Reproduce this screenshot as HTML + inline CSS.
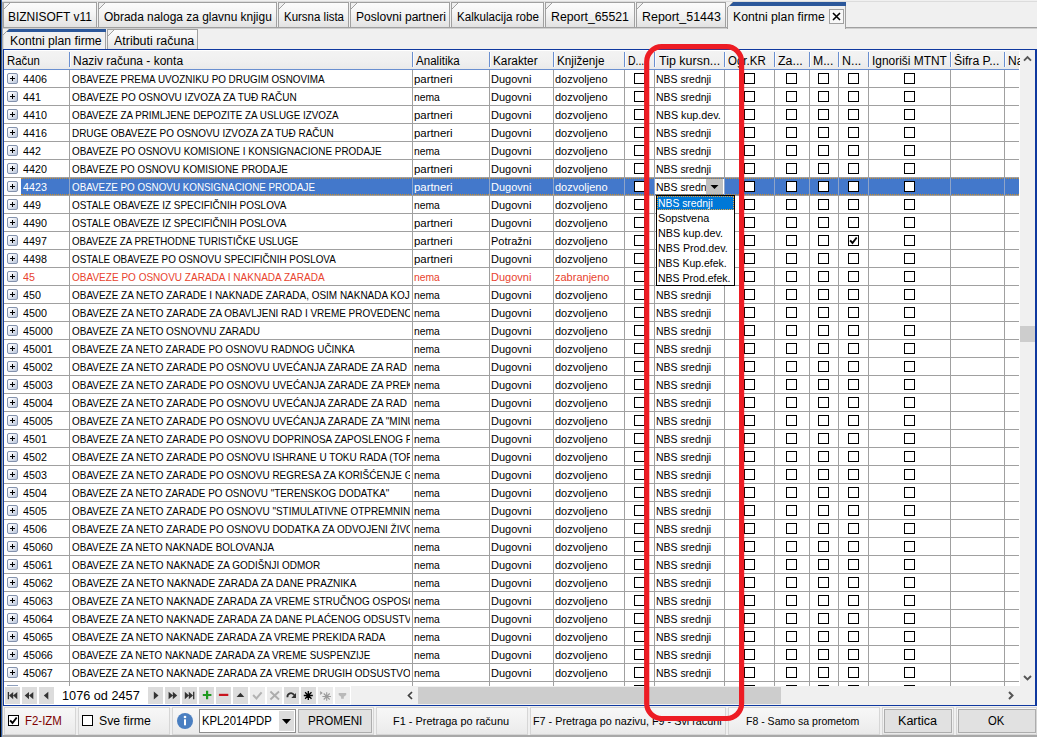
<!DOCTYPE html>
<html lang="sr"><head><meta charset="utf-8"><title>Kontni plan firme</title>
<style>
html,body{margin:0;padding:0}
body{width:1037px;height:737px;overflow:hidden;background:#f0f0f0;position:relative;font-family:"Liberation Sans","DejaVu Sans",sans-serif;font-size:12px;color:#000}
.a{position:absolute}
.t{position:absolute;white-space:nowrap;line-height:14px;height:15px}
.k{overflow:hidden}
.s{display:inline-block;transform-origin:0 50%}
.tab{position:absolute;top:2px;height:24px;border:1px solid #a0a0a0;border-bottom:none;box-sizing:content-box;
 background:linear-gradient(135deg,#f0f0f0 0,#f0f0f0 3.9px,#a0a0a0 3.9px,#a0a0a0 4.8px,rgba(0,0,0,0) 4.8px),linear-gradient(#fcfcfc,#f4f4f4 45%,#e2e2e2)}
.hs{position:absolute;top:52px;height:15px;width:1px;background:#6a8fd0;box-shadow:1px 0 0 #fbfbfb}
.vl{position:absolute;top:70px;height:616px;width:1px;background:#a0a0a0}
.hl{position:absolute;left:4px;width:1015px;height:1px;background:#a0a0a0}
.cb{position:absolute;width:9px;height:9px;border:1px solid #000;background:#fff}
.ex{position:absolute;left:7px;width:9px;height:9px;border:1px solid #8392ad;border-radius:2px;background:linear-gradient(135deg,#fdfdfe 15%,#b9c5da)}
.ex:before{content:"";position:absolute;left:2px;top:4px;width:5px;height:1px;background:#000}
.ex:after{content:"";position:absolute;left:4px;top:2px;width:1px;height:5px;background:#000}
.nb{position:absolute;top:687px;width:15px;height:17px;background:#dcdcdc}
.nb.d{background:#ececec}
.pn{position:absolute;top:707px;height:26px;border:1px solid #d6d6d6;box-sizing:content-box;background:linear-gradient(#f7f7f7,#f1f1f1 55%,#eaeaea)}
.btn{position:absolute;top:709px;height:22px;border:1px solid #adadad;background:#e1e1e1;box-sizing:content-box}
</style></head><body>

<div class="a" style="left:0;top:0;width:1px;height:737px;background:#000"></div>
<div class="a" style="left:1px;top:0;width:1px;height:737px;background:#2b5ca8"></div>
<div class="a" style="left:2px;top:2px;width:1px;height:735px;background:#adadad"></div>
<div class="a" style="left:2px;top:1px;width:1035px;height:1px;background:#dcdcdc"></div>
<div class="a" style="left:3px;top:27px;width:1034px;height:1px;background:#a0a0a0"></div>
<div class="a" style="left:3px;top:28px;width:1034px;height:1px;background:#cfcfcf"></div>
<div class="tab" style="left:3px;width:92px"></div>
<div class="t" style="left:8px;top:10px"><span class="s" style="transform:scaleX(0.995)">BIZNISOFT v11</span></div>
<div class="tab" style="left:98px;width:177px"></div>
<div class="t" style="left:104px;top:10px"><span class="s" style="transform:scaleX(0.994)">Obrada naloga za glavnu knjigu</span></div>
<div class="tab" style="left:278px;width:69px"></div>
<div class="t" style="left:284px;top:10px"><span class="s" style="transform:scaleX(0.957)">Kursna lista</span></div>
<div class="tab" style="left:350px;width:98px"></div>
<div class="t" style="left:356px;top:10px"><span class="s" style="transform:scaleX(1.005)">Poslovni partneri</span></div>
<div class="tab" style="left:451px;width:91px"></div>
<div class="t" style="left:457px;top:10px"><span class="s" style="transform:scaleX(0.966)">Kalkulacija robe</span></div>
<div class="tab" style="left:545px;width:88px"></div>
<div class="t" style="left:551px;top:10px"><span class="s" style="transform:scaleX(1.025)">Report_65521</span></div>
<div class="tab" style="left:636px;width:88px"></div>
<div class="t" style="left:642px;top:10px"><span class="s" style="transform:scaleX(1.036)">Report_51443</span></div>
<div class="a" style="left:727px;top:2px;width:119px;height:27px;background:#f0f0f0;border-left:1px solid #a0a0a0;border-right:1px solid #a0a0a0;box-sizing:border-box"></div>
<div class="a" style="left:727px;top:2px;width:119px;height:4px;background:#2b579a"></div>
<div class="a" style="left:727px;top:2px;width:8px;height:8px;background:linear-gradient(135deg,#f0f0f0 0,#f0f0f0 3.9px,#a0a0a0 3.9px,#a0a0a0 4.8px,rgba(0,0,0,0) 4.8px)"></div>
<div class="t" style="left:733px;top:10px"><span class="s" style="transform:scaleX(1.019)">Kontni plan firme</span></div>
<div class="a" style="left:829px;top:9px;width:13px;height:13px;border:1px solid #a0a0a0;background:#f8f8f8;box-sizing:content-box"><svg width="13" height="13" viewBox="0 0 13 13" style="position:absolute;left:0;top:0"><path d="M3 3L10 10M10 3L3 10" stroke="#000" stroke-width="1.6" fill="none"/></svg></div>
<div class="a" style="left:3px;top:29px;width:103px;height:20px;background:#f0f0f0;border-left:1px solid #d8d8d8;border-right:1px solid #a0a0a0;box-sizing:border-box"></div>
<div class="a" style="left:3px;top:29px;width:103px;height:3px;background:#2b579a"></div>
<div class="a" style="left:3px;top:29px;width:8px;height:8px;background:linear-gradient(135deg,#f0f0f0 0,#f0f0f0 3.9px,#a0a0a0 3.9px,#a0a0a0 4.8px,rgba(0,0,0,0) 4.8px)"></div>
<div class="t" style="left:10px;top:34px"><span class="s" style="transform:scaleX(1.018)">Kontni plan firme</span></div>
<div class="tab" style="left:107px;top:29px;width:89px;height:19px"></div>
<div class="t" style="left:114px;top:34px"><span class="s" style="transform:scaleX(1.037)">Atributi računa</span></div>
<div class="a" style="left:3px;top:49px;width:1034px;height:657px;background:#10399f"></div>
<div class="a" style="left:4px;top:50px;width:1031px;height:655px;background:#fff"></div>
<div class="a" style="left:4px;top:50px;width:1015px;height:19px;background:linear-gradient(#fff 0,#fff 1px,#f3f3f3 1px,#f0f0f0 60%,#eaeaea)"></div>
<div class="a" style="left:4px;top:69px;width:1015px;height:1px;background:#6a8fd0"></div>
<div class="t k" style="left:7px;top:54px;width:62px"><span class="s" style="transform:scaleX(0.946)">Račun</span></div>
<div class="t k" style="left:73px;top:54px;width:339px">Naziv računa - konta</div>
<div class="t k" style="left:416px;top:54px;width:73px"><span class="s" style="transform:scaleX(0.963)">Analitika</span></div>
<div class="t k" style="left:493px;top:54px;width:60px"><span class="s" style="transform:scaleX(0.983)">Karakter</span></div>
<div class="t k" style="left:557px;top:54px;width:67px"><span class="s" style="transform:scaleX(0.973)">Knjiženje</span></div>
<div class="t k" style="left:628px;top:54px;width:26px"><span class="s" style="transform:scaleX(0.868)">D...</span></div>
<div class="t k" style="left:659px;top:54px;width:65px"><span class="s" style="transform:scaleX(1.039)">Tip kursn...</span></div>
<div class="t k" style="left:728px;top:54px;width:46px"><span class="s" style="transform:scaleX(0.960)">Ogr.KR</span></div>
<div class="t k" style="left:778px;top:54px;width:31px"><span class="s" style="transform:scaleX(1.033)">Za...</span></div>
<div class="t k" style="left:813px;top:54px;width:25px"><span class="s" style="transform:scaleX(1.015)">M...</span></div>
<div class="t k" style="left:842px;top:54px;width:26px"><span class="s" style="transform:scaleX(1.034)">N...</span></div>
<div class="t k" style="left:872px;top:54px;width:78px"><span class="s" style="transform:scaleX(0.993)">Ignoriši MTNT</span></div>
<div class="t k" style="left:954px;top:54px;width:50px"><span class="s" style="transform:scaleX(1.021)">Šifra P...</span></div>
<div class="t k" style="left:1008px;top:54px;width:12px">Naziv</div>
<div class="hs" style="left:69px"></div>
<div class="vl" style="left:69px"></div>
<div class="hs" style="left:412px"></div>
<div class="vl" style="left:412px"></div>
<div class="hs" style="left:489px"></div>
<div class="vl" style="left:489px"></div>
<div class="hs" style="left:553px"></div>
<div class="vl" style="left:553px"></div>
<div class="hs" style="left:624px"></div>
<div class="vl" style="left:624px"></div>
<div class="hs" style="left:654px"></div>
<div class="vl" style="left:654px"></div>
<div class="hs" style="left:724px"></div>
<div class="vl" style="left:724px"></div>
<div class="hs" style="left:774px"></div>
<div class="vl" style="left:774px"></div>
<div class="hs" style="left:809px"></div>
<div class="vl" style="left:809px"></div>
<div class="hs" style="left:838px"></div>
<div class="vl" style="left:838px"></div>
<div class="hs" style="left:868px"></div>
<div class="vl" style="left:868px"></div>
<div class="hs" style="left:950px"></div>
<div class="vl" style="left:950px"></div>
<div class="hs" style="left:1004px"></div>
<div class="vl" style="left:1004px"></div>
<div class="hl" style="top:87px"></div>
<div class="ex" style="top:73px"></div>
<div class="t k" style="left:23px;top:72px;font-size:11px;width:46px"><span class="s" style="transform:scaleX(0.975)">4406</span></div>
<div class="t k" style="left:72px;top:72px;font-size:11px;width:338px"><span class="s" style="transform:scaleX(0.897)">OBAVEZE PREMA UVOZNIKU PO DRUGIM OSNOVIMA</span></div>
<div class="t k" style="left:414px;top:72px;font-size:11px;width:75px"><span class="s" style="transform:scaleX(1.035)">partneri</span></div>
<div class="t k" style="left:491px;top:72px;font-size:11px;width:62px">Dugovni</div>
<div class="t k" style="left:555px;top:72px;font-size:11px;width:69px">dozvoljeno</div>
<div class="t k" style="left:656px;top:72px;font-size:11px;width:68px"><span class="s" style="transform:scaleX(0.950)">NBS srednji</span></div>
<div class="cb" style="left:634px;top:73px"></div>
<div class="cb" style="left:744px;top:73px"></div>
<div class="cb" style="left:786px;top:73px"></div>
<div class="cb" style="left:818px;top:73px"></div>
<div class="cb" style="left:848px;top:73px"></div>
<div class="cb" style="left:904px;top:73px"></div>
<div class="hl" style="top:105px"></div>
<div class="ex" style="top:91px"></div>
<div class="t k" style="left:23px;top:90px;font-size:11px;width:46px"><span class="s" style="transform:scaleX(0.975)">441</span></div>
<div class="t k" style="left:72px;top:90px;font-size:11px;width:338px"><span class="s" style="transform:scaleX(0.909)">OBAVEZE PO OSNOVU IZVOZA ZA TUĐ RAČUN</span></div>
<div class="t k" style="left:414px;top:90px;font-size:11px;width:75px"><span class="s" style="transform:scaleX(0.940)">nema</span></div>
<div class="t k" style="left:491px;top:90px;font-size:11px;width:62px">Dugovni</div>
<div class="t k" style="left:555px;top:90px;font-size:11px;width:69px">dozvoljeno</div>
<div class="t k" style="left:656px;top:90px;font-size:11px;width:68px"><span class="s" style="transform:scaleX(0.950)">NBS srednji</span></div>
<div class="cb" style="left:634px;top:91px"></div>
<div class="cb" style="left:744px;top:91px"></div>
<div class="cb" style="left:786px;top:91px"></div>
<div class="cb" style="left:818px;top:91px"></div>
<div class="cb" style="left:848px;top:91px"></div>
<div class="cb" style="left:904px;top:91px"></div>
<div class="hl" style="top:123px"></div>
<div class="ex" style="top:109px"></div>
<div class="t k" style="left:23px;top:108px;font-size:11px;width:46px"><span class="s" style="transform:scaleX(0.975)">4410</span></div>
<div class="t k" style="left:72px;top:108px;font-size:11px;width:338px"><span class="s" style="transform:scaleX(0.894)">OBAVEZE ZA PRIMLJENE DEPOZITE ZA USLUGE IZVOZA</span></div>
<div class="t k" style="left:414px;top:108px;font-size:11px;width:75px"><span class="s" style="transform:scaleX(1.035)">partneri</span></div>
<div class="t k" style="left:491px;top:108px;font-size:11px;width:62px">Dugovni</div>
<div class="t k" style="left:555px;top:108px;font-size:11px;width:69px">dozvoljeno</div>
<div class="t k" style="left:656px;top:108px;font-size:11px;width:68px"><span class="s" style="transform:scaleX(0.975)">NBS kup.dev.</span></div>
<div class="cb" style="left:634px;top:109px"></div>
<div class="cb" style="left:744px;top:109px"></div>
<div class="cb" style="left:786px;top:109px"></div>
<div class="cb" style="left:818px;top:109px"></div>
<div class="cb" style="left:848px;top:109px"></div>
<div class="cb" style="left:904px;top:109px"></div>
<div class="hl" style="top:141px"></div>
<div class="ex" style="top:127px"></div>
<div class="t k" style="left:23px;top:126px;font-size:11px;width:46px"><span class="s" style="transform:scaleX(0.975)">4416</span></div>
<div class="t k" style="left:72px;top:126px;font-size:11px;width:338px"><span class="s" style="transform:scaleX(0.903)">DRUGE OBAVEZE PO OSNOVU IZVOZA ZA TUĐ RAČUN</span></div>
<div class="t k" style="left:414px;top:126px;font-size:11px;width:75px"><span class="s" style="transform:scaleX(1.035)">partneri</span></div>
<div class="t k" style="left:491px;top:126px;font-size:11px;width:62px">Dugovni</div>
<div class="t k" style="left:555px;top:126px;font-size:11px;width:69px">dozvoljeno</div>
<div class="t k" style="left:656px;top:126px;font-size:11px;width:68px"><span class="s" style="transform:scaleX(0.950)">NBS srednji</span></div>
<div class="cb" style="left:634px;top:127px"></div>
<div class="cb" style="left:744px;top:127px"></div>
<div class="cb" style="left:786px;top:127px"></div>
<div class="cb" style="left:818px;top:127px"></div>
<div class="cb" style="left:848px;top:127px"></div>
<div class="cb" style="left:904px;top:127px"></div>
<div class="hl" style="top:159px"></div>
<div class="ex" style="top:145px"></div>
<div class="t k" style="left:23px;top:144px;font-size:11px;width:46px"><span class="s" style="transform:scaleX(0.975)">442</span></div>
<div class="t k" style="left:72px;top:144px;font-size:11px;width:338px"><span class="s" style="transform:scaleX(0.902)">OBAVEZE PO OSNOVU KOMISIONE I KONSIGNACIONE PRODAJE</span></div>
<div class="t k" style="left:414px;top:144px;font-size:11px;width:75px"><span class="s" style="transform:scaleX(0.940)">nema</span></div>
<div class="t k" style="left:491px;top:144px;font-size:11px;width:62px">Dugovni</div>
<div class="t k" style="left:555px;top:144px;font-size:11px;width:69px">dozvoljeno</div>
<div class="t k" style="left:656px;top:144px;font-size:11px;width:68px"><span class="s" style="transform:scaleX(0.950)">NBS srednji</span></div>
<div class="cb" style="left:634px;top:145px"></div>
<div class="cb" style="left:744px;top:145px"></div>
<div class="cb" style="left:786px;top:145px"></div>
<div class="cb" style="left:818px;top:145px"></div>
<div class="cb" style="left:848px;top:145px"></div>
<div class="cb" style="left:904px;top:145px"></div>
<div class="hl" style="top:177px"></div>
<div class="ex" style="top:163px"></div>
<div class="t k" style="left:23px;top:162px;font-size:11px;width:46px"><span class="s" style="transform:scaleX(0.975)">4420</span></div>
<div class="t k" style="left:72px;top:162px;font-size:11px;width:338px"><span class="s" style="transform:scaleX(0.895)">OBAVEZE PO OSNOVU KOMISIONE PRODAJE</span></div>
<div class="t k" style="left:414px;top:162px;font-size:11px;width:75px"><span class="s" style="transform:scaleX(1.035)">partneri</span></div>
<div class="t k" style="left:491px;top:162px;font-size:11px;width:62px">Dugovni</div>
<div class="t k" style="left:555px;top:162px;font-size:11px;width:69px">dozvoljeno</div>
<div class="t k" style="left:656px;top:162px;font-size:11px;width:68px"><span class="s" style="transform:scaleX(0.950)">NBS srednji</span></div>
<div class="cb" style="left:634px;top:163px"></div>
<div class="cb" style="left:744px;top:163px"></div>
<div class="cb" style="left:786px;top:163px"></div>
<div class="cb" style="left:818px;top:163px"></div>
<div class="cb" style="left:848px;top:163px"></div>
<div class="cb" style="left:904px;top:163px"></div>
<div class="hl" style="top:195px"></div>
<div class="a" style="left:21px;top:178px;width:998px;height:17px;background:#4378cb"></div>
<div class="a" style="left:21px;top:178px;width:998px;height:17px;box-sizing:border-box;border-top:1px dotted #c78d2e;border-bottom:1px dotted #c78d2e"></div>
<div class="a" style="left:69px;top:178px;width:1px;height:17px;background:#8fa4c8"></div>
<div class="a" style="left:412px;top:178px;width:1px;height:17px;background:#8fa4c8"></div>
<div class="a" style="left:489px;top:178px;width:1px;height:17px;background:#8fa4c8"></div>
<div class="a" style="left:553px;top:178px;width:1px;height:17px;background:#8fa4c8"></div>
<div class="a" style="left:624px;top:178px;width:1px;height:17px;background:#8fa4c8"></div>
<div class="a" style="left:654px;top:178px;width:1px;height:17px;background:#8fa4c8"></div>
<div class="a" style="left:724px;top:178px;width:1px;height:17px;background:#8fa4c8"></div>
<div class="a" style="left:774px;top:178px;width:1px;height:17px;background:#8fa4c8"></div>
<div class="a" style="left:809px;top:178px;width:1px;height:17px;background:#8fa4c8"></div>
<div class="a" style="left:838px;top:178px;width:1px;height:17px;background:#8fa4c8"></div>
<div class="a" style="left:868px;top:178px;width:1px;height:17px;background:#8fa4c8"></div>
<div class="a" style="left:950px;top:178px;width:1px;height:17px;background:#8fa4c8"></div>
<div class="a" style="left:1004px;top:178px;width:1px;height:17px;background:#8fa4c8"></div>
<div class="ex" style="top:181px"></div>
<div class="t k" style="left:23px;top:180px;font-size:11px;color:#fff;width:46px"><span class="s" style="transform:scaleX(0.975)">4423</span></div>
<div class="t k" style="left:72px;top:180px;font-size:11px;color:#fff;width:338px"><span class="s" style="transform:scaleX(0.894)">OBAVEZE PO OSNOVU KONSIGNACIONE PRODAJE</span></div>
<div class="t k" style="left:414px;top:180px;font-size:11px;color:#fff;width:75px"><span class="s" style="transform:scaleX(1.035)">partneri</span></div>
<div class="t k" style="left:491px;top:180px;font-size:11px;color:#fff;width:62px">Dugovni</div>
<div class="t k" style="left:555px;top:180px;font-size:11px;color:#fff;width:69px">dozvoljeno</div>
<div class="cb" style="left:634px;top:181px"></div>
<div class="cb" style="left:744px;top:181px"></div>
<div class="cb" style="left:786px;top:181px"></div>
<div class="cb" style="left:818px;top:181px"></div>
<div class="cb" style="left:848px;top:181px"></div>
<div class="cb" style="left:904px;top:181px"></div>
<div class="hl" style="top:213px"></div>
<div class="ex" style="top:199px"></div>
<div class="t k" style="left:23px;top:198px;font-size:11px;width:46px"><span class="s" style="transform:scaleX(0.975)">449</span></div>
<div class="t k" style="left:72px;top:198px;font-size:11px;width:338px"><span class="s" style="transform:scaleX(0.904)">OSTALE OBAVEZE IZ SPECIFIČNIH POSLOVA</span></div>
<div class="t k" style="left:414px;top:198px;font-size:11px;width:75px"><span class="s" style="transform:scaleX(0.940)">nema</span></div>
<div class="t k" style="left:491px;top:198px;font-size:11px;width:62px">Dugovni</div>
<div class="t k" style="left:555px;top:198px;font-size:11px;width:69px">dozvoljeno</div>
<div class="t k" style="left:656px;top:198px;font-size:11px;width:68px"><span class="s" style="transform:scaleX(0.950)">NBS srednji</span></div>
<div class="cb" style="left:634px;top:199px"></div>
<div class="cb" style="left:744px;top:199px"></div>
<div class="cb" style="left:786px;top:199px"></div>
<div class="cb" style="left:818px;top:199px"></div>
<div class="cb" style="left:848px;top:199px"></div>
<div class="cb" style="left:904px;top:199px"></div>
<div class="hl" style="top:231px"></div>
<div class="ex" style="top:217px"></div>
<div class="t k" style="left:23px;top:216px;font-size:11px;width:46px"><span class="s" style="transform:scaleX(0.975)">4490</span></div>
<div class="t k" style="left:72px;top:216px;font-size:11px;width:338px"><span class="s" style="transform:scaleX(0.904)">OSTALE OBAVEZE IZ SPECIFIČNIH POSLOVA</span></div>
<div class="t k" style="left:414px;top:216px;font-size:11px;width:75px"><span class="s" style="transform:scaleX(1.035)">partneri</span></div>
<div class="t k" style="left:491px;top:216px;font-size:11px;width:62px">Dugovni</div>
<div class="t k" style="left:555px;top:216px;font-size:11px;width:69px">dozvoljeno</div>
<div class="t k" style="left:656px;top:216px;font-size:11px;width:68px"><span class="s" style="transform:scaleX(0.950)">NBS srednji</span></div>
<div class="cb" style="left:634px;top:217px"></div>
<div class="cb" style="left:744px;top:217px"></div>
<div class="cb" style="left:786px;top:217px"></div>
<div class="cb" style="left:818px;top:217px"></div>
<div class="cb" style="left:848px;top:217px"></div>
<div class="cb" style="left:904px;top:217px"></div>
<div class="hl" style="top:249px"></div>
<div class="ex" style="top:235px"></div>
<div class="t k" style="left:23px;top:234px;font-size:11px;width:46px"><span class="s" style="transform:scaleX(0.975)">4497</span></div>
<div class="t k" style="left:72px;top:234px;font-size:11px;width:338px"><span class="s" style="transform:scaleX(0.883)">OBAVEZE ZA PRETHODNE TURISTIČKE USLUGE</span></div>
<div class="t k" style="left:414px;top:234px;font-size:11px;width:75px"><span class="s" style="transform:scaleX(1.035)">partneri</span></div>
<div class="t k" style="left:491px;top:234px;font-size:11px;width:62px">Potražni</div>
<div class="t k" style="left:555px;top:234px;font-size:11px;width:69px">dozvoljeno</div>
<div class="t k" style="left:656px;top:234px;font-size:11px;width:68px"><span class="s" style="transform:scaleX(0.950)">NBS srednji</span></div>
<div class="cb" style="left:634px;top:235px"></div>
<div class="cb" style="left:744px;top:235px"></div>
<div class="cb" style="left:786px;top:235px"></div>
<div class="cb" style="left:818px;top:235px"></div>
<div class="cb" style="left:848px;top:235px"></div>
<div class="cb" style="left:904px;top:235px"></div>
<svg class="a" style="left:848px;top:235px" width="11" height="11" viewBox="0 0 11 11"><path d="M2.1 5.3L4.5 8L8.7 2.5" stroke="#000" stroke-width="1.9" fill="none"/></svg>
<div class="hl" style="top:267px"></div>
<div class="ex" style="top:253px"></div>
<div class="t k" style="left:23px;top:252px;font-size:11px;width:46px"><span class="s" style="transform:scaleX(0.975)">4498</span></div>
<div class="t k" style="left:72px;top:252px;font-size:11px;width:338px"><span class="s" style="transform:scaleX(0.897)">OSTALE OBAVEZE PO OSNOVU SPECIFIČNIH POSLOVA</span></div>
<div class="t k" style="left:414px;top:252px;font-size:11px;width:75px"><span class="s" style="transform:scaleX(1.035)">partneri</span></div>
<div class="t k" style="left:491px;top:252px;font-size:11px;width:62px">Dugovni</div>
<div class="t k" style="left:555px;top:252px;font-size:11px;width:69px">dozvoljeno</div>
<div class="t k" style="left:656px;top:252px;font-size:11px;width:68px"><span class="s" style="transform:scaleX(0.950)">NBS srednji</span></div>
<div class="cb" style="left:634px;top:253px"></div>
<div class="cb" style="left:744px;top:253px"></div>
<div class="cb" style="left:786px;top:253px"></div>
<div class="cb" style="left:818px;top:253px"></div>
<div class="cb" style="left:848px;top:253px"></div>
<div class="cb" style="left:904px;top:253px"></div>
<div class="hl" style="top:285px"></div>
<div class="ex" style="top:271px"></div>
<div class="t k" style="left:23px;top:270px;font-size:11px;color:#e8432e;width:46px"><span class="s" style="transform:scaleX(0.975)">45</span></div>
<div class="t k" style="left:72px;top:270px;font-size:11px;color:#e8432e;width:338px"><span class="s" style="transform:scaleX(0.911)">OBAVEZE PO OSNOVU ZARADA I NAKNADA ZARADA</span></div>
<div class="t k" style="left:414px;top:270px;font-size:11px;color:#e8432e;width:75px"><span class="s" style="transform:scaleX(0.940)">nema</span></div>
<div class="t k" style="left:491px;top:270px;font-size:11px;color:#e8432e;width:62px">Dugovni</div>
<div class="t k" style="left:555px;top:270px;font-size:11px;color:#e8432e;width:69px">zabranjeno</div>
<div class="t k" style="left:656px;top:270px;font-size:11px;color:#e8432e;width:68px"><span class="s" style="transform:scaleX(0.950)">NBS srednji</span></div>
<div class="cb" style="left:634px;top:271px"></div>
<div class="cb" style="left:744px;top:271px"></div>
<div class="cb" style="left:786px;top:271px"></div>
<div class="cb" style="left:818px;top:271px"></div>
<div class="cb" style="left:848px;top:271px"></div>
<div class="cb" style="left:904px;top:271px"></div>
<div class="hl" style="top:303px"></div>
<div class="ex" style="top:289px"></div>
<div class="t k" style="left:23px;top:288px;font-size:11px;width:46px"><span class="s" style="transform:scaleX(0.975)">450</span></div>
<div class="t k" style="left:72px;top:288px;font-size:11px;width:338px"><span class="s" style="transform:scaleX(0.905)">OBAVEZE ZA NETO ZARADE I NAKNADE ZARADA, OSIM NAKNADA KOJE SE REFUNDIRAJU</span></div>
<div class="t k" style="left:414px;top:288px;font-size:11px;width:75px"><span class="s" style="transform:scaleX(0.940)">nema</span></div>
<div class="t k" style="left:491px;top:288px;font-size:11px;width:62px">Dugovni</div>
<div class="t k" style="left:555px;top:288px;font-size:11px;width:69px">dozvoljeno</div>
<div class="t k" style="left:656px;top:288px;font-size:11px;width:68px"><span class="s" style="transform:scaleX(0.950)">NBS srednji</span></div>
<div class="cb" style="left:634px;top:289px"></div>
<div class="cb" style="left:744px;top:289px"></div>
<div class="cb" style="left:786px;top:289px"></div>
<div class="cb" style="left:818px;top:289px"></div>
<div class="cb" style="left:848px;top:289px"></div>
<div class="cb" style="left:904px;top:289px"></div>
<div class="hl" style="top:321px"></div>
<div class="ex" style="top:307px"></div>
<div class="t k" style="left:23px;top:306px;font-size:11px;width:46px"><span class="s" style="transform:scaleX(0.975)">4500</span></div>
<div class="t k" style="left:72px;top:306px;font-size:11px;width:338px"><span class="s" style="transform:scaleX(0.905)">OBAVEZE ZA NETO ZARADE ZA OBAVLJENI RAD I VREME PROVEDENO NA RADU</span></div>
<div class="t k" style="left:414px;top:306px;font-size:11px;width:75px"><span class="s" style="transform:scaleX(0.940)">nema</span></div>
<div class="t k" style="left:491px;top:306px;font-size:11px;width:62px">Dugovni</div>
<div class="t k" style="left:555px;top:306px;font-size:11px;width:69px">dozvoljeno</div>
<div class="t k" style="left:656px;top:306px;font-size:11px;width:68px"><span class="s" style="transform:scaleX(0.950)">NBS srednji</span></div>
<div class="cb" style="left:634px;top:307px"></div>
<div class="cb" style="left:744px;top:307px"></div>
<div class="cb" style="left:786px;top:307px"></div>
<div class="cb" style="left:818px;top:307px"></div>
<div class="cb" style="left:848px;top:307px"></div>
<div class="cb" style="left:904px;top:307px"></div>
<div class="hl" style="top:339px"></div>
<div class="ex" style="top:325px"></div>
<div class="t k" style="left:23px;top:324px;font-size:11px;width:46px"><span class="s" style="transform:scaleX(0.975)">45000</span></div>
<div class="t k" style="left:72px;top:324px;font-size:11px;width:338px"><span class="s" style="transform:scaleX(0.904)">OBAVEZE ZA NETO OSNOVNU ZARADU</span></div>
<div class="t k" style="left:414px;top:324px;font-size:11px;width:75px"><span class="s" style="transform:scaleX(0.940)">nema</span></div>
<div class="t k" style="left:491px;top:324px;font-size:11px;width:62px">Dugovni</div>
<div class="t k" style="left:555px;top:324px;font-size:11px;width:69px">dozvoljeno</div>
<div class="t k" style="left:656px;top:324px;font-size:11px;width:68px"><span class="s" style="transform:scaleX(0.950)">NBS srednji</span></div>
<div class="cb" style="left:634px;top:325px"></div>
<div class="cb" style="left:744px;top:325px"></div>
<div class="cb" style="left:786px;top:325px"></div>
<div class="cb" style="left:818px;top:325px"></div>
<div class="cb" style="left:848px;top:325px"></div>
<div class="cb" style="left:904px;top:325px"></div>
<div class="hl" style="top:357px"></div>
<div class="ex" style="top:343px"></div>
<div class="t k" style="left:23px;top:342px;font-size:11px;width:46px"><span class="s" style="transform:scaleX(0.975)">45001</span></div>
<div class="t k" style="left:72px;top:342px;font-size:11px;width:338px"><span class="s" style="transform:scaleX(0.899)">OBAVEZE ZA NETO ZARADE PO OSNOVU RADNOG UČINKA</span></div>
<div class="t k" style="left:414px;top:342px;font-size:11px;width:75px"><span class="s" style="transform:scaleX(0.940)">nema</span></div>
<div class="t k" style="left:491px;top:342px;font-size:11px;width:62px">Dugovni</div>
<div class="t k" style="left:555px;top:342px;font-size:11px;width:69px">dozvoljeno</div>
<div class="t k" style="left:656px;top:342px;font-size:11px;width:68px"><span class="s" style="transform:scaleX(0.950)">NBS srednji</span></div>
<div class="cb" style="left:634px;top:343px"></div>
<div class="cb" style="left:744px;top:343px"></div>
<div class="cb" style="left:786px;top:343px"></div>
<div class="cb" style="left:818px;top:343px"></div>
<div class="cb" style="left:848px;top:343px"></div>
<div class="cb" style="left:904px;top:343px"></div>
<div class="hl" style="top:375px"></div>
<div class="ex" style="top:361px"></div>
<div class="t k" style="left:23px;top:360px;font-size:11px;width:46px"><span class="s" style="transform:scaleX(0.975)">45002</span></div>
<div class="t k" style="left:72px;top:360px;font-size:11px;width:338px"><span class="s" style="transform:scaleX(0.905)">OBAVEZE ZA NETO ZARADE PO OSNOVU UVEĆANJA ZARADE ZA RAD NA DAN PRAZNIKA</span></div>
<div class="t k" style="left:414px;top:360px;font-size:11px;width:75px"><span class="s" style="transform:scaleX(0.940)">nema</span></div>
<div class="t k" style="left:491px;top:360px;font-size:11px;width:62px">Dugovni</div>
<div class="t k" style="left:555px;top:360px;font-size:11px;width:69px">dozvoljeno</div>
<div class="t k" style="left:656px;top:360px;font-size:11px;width:68px"><span class="s" style="transform:scaleX(0.950)">NBS srednji</span></div>
<div class="cb" style="left:634px;top:361px"></div>
<div class="cb" style="left:744px;top:361px"></div>
<div class="cb" style="left:786px;top:361px"></div>
<div class="cb" style="left:818px;top:361px"></div>
<div class="cb" style="left:848px;top:361px"></div>
<div class="cb" style="left:904px;top:361px"></div>
<div class="hl" style="top:393px"></div>
<div class="ex" style="top:379px"></div>
<div class="t k" style="left:23px;top:378px;font-size:11px;width:46px"><span class="s" style="transform:scaleX(0.975)">45003</span></div>
<div class="t k" style="left:72px;top:378px;font-size:11px;width:338px"><span class="s" style="transform:scaleX(0.905)">OBAVEZE ZA NETO ZARADE PO OSNOVU UVEĆANJA ZARADE ZA PREKOVREMENI RAD</span></div>
<div class="t k" style="left:414px;top:378px;font-size:11px;width:75px"><span class="s" style="transform:scaleX(0.940)">nema</span></div>
<div class="t k" style="left:491px;top:378px;font-size:11px;width:62px">Dugovni</div>
<div class="t k" style="left:555px;top:378px;font-size:11px;width:69px">dozvoljeno</div>
<div class="t k" style="left:656px;top:378px;font-size:11px;width:68px"><span class="s" style="transform:scaleX(0.950)">NBS srednji</span></div>
<div class="cb" style="left:634px;top:379px"></div>
<div class="cb" style="left:744px;top:379px"></div>
<div class="cb" style="left:786px;top:379px"></div>
<div class="cb" style="left:818px;top:379px"></div>
<div class="cb" style="left:848px;top:379px"></div>
<div class="cb" style="left:904px;top:379px"></div>
<div class="hl" style="top:411px"></div>
<div class="ex" style="top:397px"></div>
<div class="t k" style="left:23px;top:396px;font-size:11px;width:46px"><span class="s" style="transform:scaleX(0.975)">45004</span></div>
<div class="t k" style="left:72px;top:396px;font-size:11px;width:338px"><span class="s" style="transform:scaleX(0.905)">OBAVEZE ZA NETO ZARADE PO OSNOVU UVEĆANJA ZARADE ZA RAD NOĆU</span></div>
<div class="t k" style="left:414px;top:396px;font-size:11px;width:75px"><span class="s" style="transform:scaleX(0.940)">nema</span></div>
<div class="t k" style="left:491px;top:396px;font-size:11px;width:62px">Dugovni</div>
<div class="t k" style="left:555px;top:396px;font-size:11px;width:69px">dozvoljeno</div>
<div class="t k" style="left:656px;top:396px;font-size:11px;width:68px"><span class="s" style="transform:scaleX(0.950)">NBS srednji</span></div>
<div class="cb" style="left:634px;top:397px"></div>
<div class="cb" style="left:744px;top:397px"></div>
<div class="cb" style="left:786px;top:397px"></div>
<div class="cb" style="left:818px;top:397px"></div>
<div class="cb" style="left:848px;top:397px"></div>
<div class="cb" style="left:904px;top:397px"></div>
<div class="hl" style="top:429px"></div>
<div class="ex" style="top:415px"></div>
<div class="t k" style="left:23px;top:414px;font-size:11px;width:46px"><span class="s" style="transform:scaleX(0.975)">45005</span></div>
<div class="t k" style="left:72px;top:414px;font-size:11px;width:338px"><span class="s" style="transform:scaleX(0.905)">OBAVEZE ZA NETO ZARADE PO OSNOVU UVEĆANJA ZARADE ZA &quot;MINULI RAD&quot;</span></div>
<div class="t k" style="left:414px;top:414px;font-size:11px;width:75px"><span class="s" style="transform:scaleX(0.940)">nema</span></div>
<div class="t k" style="left:491px;top:414px;font-size:11px;width:62px">Dugovni</div>
<div class="t k" style="left:555px;top:414px;font-size:11px;width:69px">dozvoljeno</div>
<div class="t k" style="left:656px;top:414px;font-size:11px;width:68px"><span class="s" style="transform:scaleX(0.950)">NBS srednji</span></div>
<div class="cb" style="left:634px;top:415px"></div>
<div class="cb" style="left:744px;top:415px"></div>
<div class="cb" style="left:786px;top:415px"></div>
<div class="cb" style="left:818px;top:415px"></div>
<div class="cb" style="left:848px;top:415px"></div>
<div class="cb" style="left:904px;top:415px"></div>
<div class="hl" style="top:447px"></div>
<div class="ex" style="top:433px"></div>
<div class="t k" style="left:23px;top:432px;font-size:11px;width:46px"><span class="s" style="transform:scaleX(0.975)">4501</span></div>
<div class="t k" style="left:72px;top:432px;font-size:11px;width:338px"><span class="s" style="transform:scaleX(0.905)">OBAVEZE ZA NETO ZARADE PO OSNOVU DOPRINOSA ZAPOSLENOG POSLOVNOM USPEHU</span></div>
<div class="t k" style="left:414px;top:432px;font-size:11px;width:75px"><span class="s" style="transform:scaleX(0.940)">nema</span></div>
<div class="t k" style="left:491px;top:432px;font-size:11px;width:62px">Dugovni</div>
<div class="t k" style="left:555px;top:432px;font-size:11px;width:69px">dozvoljeno</div>
<div class="t k" style="left:656px;top:432px;font-size:11px;width:68px"><span class="s" style="transform:scaleX(0.950)">NBS srednji</span></div>
<div class="cb" style="left:634px;top:433px"></div>
<div class="cb" style="left:744px;top:433px"></div>
<div class="cb" style="left:786px;top:433px"></div>
<div class="cb" style="left:818px;top:433px"></div>
<div class="cb" style="left:848px;top:433px"></div>
<div class="cb" style="left:904px;top:433px"></div>
<div class="hl" style="top:465px"></div>
<div class="ex" style="top:451px"></div>
<div class="t k" style="left:23px;top:450px;font-size:11px;width:46px"><span class="s" style="transform:scaleX(0.975)">4502</span></div>
<div class="t k" style="left:72px;top:450px;font-size:11px;width:338px"><span class="s" style="transform:scaleX(0.905)">OBAVEZE ZA NETO ZARADE PO OSNOVU ISHRANE U TOKU RADA (TOPLI OBROK)</span></div>
<div class="t k" style="left:414px;top:450px;font-size:11px;width:75px"><span class="s" style="transform:scaleX(0.940)">nema</span></div>
<div class="t k" style="left:491px;top:450px;font-size:11px;width:62px">Dugovni</div>
<div class="t k" style="left:555px;top:450px;font-size:11px;width:69px">dozvoljeno</div>
<div class="t k" style="left:656px;top:450px;font-size:11px;width:68px"><span class="s" style="transform:scaleX(0.950)">NBS srednji</span></div>
<div class="cb" style="left:634px;top:451px"></div>
<div class="cb" style="left:744px;top:451px"></div>
<div class="cb" style="left:786px;top:451px"></div>
<div class="cb" style="left:818px;top:451px"></div>
<div class="cb" style="left:848px;top:451px"></div>
<div class="cb" style="left:904px;top:451px"></div>
<div class="hl" style="top:483px"></div>
<div class="ex" style="top:469px"></div>
<div class="t k" style="left:23px;top:468px;font-size:11px;width:46px"><span class="s" style="transform:scaleX(0.975)">4503</span></div>
<div class="t k" style="left:72px;top:468px;font-size:11px;width:338px"><span class="s" style="transform:scaleX(0.905)">OBAVEZE ZA NETO ZARADE PO OSNOVU REGRESA ZA KORIŠĆENJE GODIŠNJEG ODMORA</span></div>
<div class="t k" style="left:414px;top:468px;font-size:11px;width:75px"><span class="s" style="transform:scaleX(0.940)">nema</span></div>
<div class="t k" style="left:491px;top:468px;font-size:11px;width:62px">Dugovni</div>
<div class="t k" style="left:555px;top:468px;font-size:11px;width:69px">dozvoljeno</div>
<div class="t k" style="left:656px;top:468px;font-size:11px;width:68px"><span class="s" style="transform:scaleX(0.950)">NBS srednji</span></div>
<div class="cb" style="left:634px;top:469px"></div>
<div class="cb" style="left:744px;top:469px"></div>
<div class="cb" style="left:786px;top:469px"></div>
<div class="cb" style="left:818px;top:469px"></div>
<div class="cb" style="left:848px;top:469px"></div>
<div class="cb" style="left:904px;top:469px"></div>
<div class="hl" style="top:501px"></div>
<div class="ex" style="top:487px"></div>
<div class="t k" style="left:23px;top:486px;font-size:11px;width:46px"><span class="s" style="transform:scaleX(0.975)">4504</span></div>
<div class="t k" style="left:72px;top:486px;font-size:11px;width:338px"><span class="s" style="transform:scaleX(0.897)">OBAVEZE ZA NETO ZARADE PO OSNOVU &quot;TERENSKOG DODATKA&quot;</span></div>
<div class="t k" style="left:414px;top:486px;font-size:11px;width:75px"><span class="s" style="transform:scaleX(0.940)">nema</span></div>
<div class="t k" style="left:491px;top:486px;font-size:11px;width:62px">Dugovni</div>
<div class="t k" style="left:555px;top:486px;font-size:11px;width:69px">dozvoljeno</div>
<div class="t k" style="left:656px;top:486px;font-size:11px;width:68px"><span class="s" style="transform:scaleX(0.950)">NBS srednji</span></div>
<div class="cb" style="left:634px;top:487px"></div>
<div class="cb" style="left:744px;top:487px"></div>
<div class="cb" style="left:786px;top:487px"></div>
<div class="cb" style="left:818px;top:487px"></div>
<div class="cb" style="left:848px;top:487px"></div>
<div class="cb" style="left:904px;top:487px"></div>
<div class="hl" style="top:519px"></div>
<div class="ex" style="top:505px"></div>
<div class="t k" style="left:23px;top:504px;font-size:11px;width:46px"><span class="s" style="transform:scaleX(0.975)">4505</span></div>
<div class="t k" style="left:72px;top:504px;font-size:11px;width:338px"><span class="s" style="transform:scaleX(0.905)">OBAVEZE ZA NETO ZARADE PO OSNOVU &quot;STIMULATIVNE OTPREMNINE&quot;</span></div>
<div class="t k" style="left:414px;top:504px;font-size:11px;width:75px"><span class="s" style="transform:scaleX(0.940)">nema</span></div>
<div class="t k" style="left:491px;top:504px;font-size:11px;width:62px">Dugovni</div>
<div class="t k" style="left:555px;top:504px;font-size:11px;width:69px">dozvoljeno</div>
<div class="t k" style="left:656px;top:504px;font-size:11px;width:68px"><span class="s" style="transform:scaleX(0.950)">NBS srednji</span></div>
<div class="cb" style="left:634px;top:505px"></div>
<div class="cb" style="left:744px;top:505px"></div>
<div class="cb" style="left:786px;top:505px"></div>
<div class="cb" style="left:818px;top:505px"></div>
<div class="cb" style="left:848px;top:505px"></div>
<div class="cb" style="left:904px;top:505px"></div>
<div class="hl" style="top:537px"></div>
<div class="ex" style="top:523px"></div>
<div class="t k" style="left:23px;top:522px;font-size:11px;width:46px"><span class="s" style="transform:scaleX(0.975)">4506</span></div>
<div class="t k" style="left:72px;top:522px;font-size:11px;width:338px"><span class="s" style="transform:scaleX(0.905)">OBAVEZE ZA NETO ZARADE PO OSNOVU DODATKA ZA ODVOJENI ŽIVOT</span></div>
<div class="t k" style="left:414px;top:522px;font-size:11px;width:75px"><span class="s" style="transform:scaleX(0.940)">nema</span></div>
<div class="t k" style="left:491px;top:522px;font-size:11px;width:62px">Dugovni</div>
<div class="t k" style="left:555px;top:522px;font-size:11px;width:69px">dozvoljeno</div>
<div class="t k" style="left:656px;top:522px;font-size:11px;width:68px"><span class="s" style="transform:scaleX(0.950)">NBS srednji</span></div>
<div class="cb" style="left:634px;top:523px"></div>
<div class="cb" style="left:744px;top:523px"></div>
<div class="cb" style="left:786px;top:523px"></div>
<div class="cb" style="left:818px;top:523px"></div>
<div class="cb" style="left:848px;top:523px"></div>
<div class="cb" style="left:904px;top:523px"></div>
<div class="hl" style="top:555px"></div>
<div class="ex" style="top:541px"></div>
<div class="t k" style="left:23px;top:540px;font-size:11px;width:46px"><span class="s" style="transform:scaleX(0.975)">45060</span></div>
<div class="t k" style="left:72px;top:540px;font-size:11px;width:338px"><span class="s" style="transform:scaleX(0.896)">OBAVEZE ZA NETO NAKNADE BOLOVANJA</span></div>
<div class="t k" style="left:414px;top:540px;font-size:11px;width:75px"><span class="s" style="transform:scaleX(0.940)">nema</span></div>
<div class="t k" style="left:491px;top:540px;font-size:11px;width:62px">Dugovni</div>
<div class="t k" style="left:555px;top:540px;font-size:11px;width:69px">dozvoljeno</div>
<div class="t k" style="left:656px;top:540px;font-size:11px;width:68px"><span class="s" style="transform:scaleX(0.950)">NBS srednji</span></div>
<div class="cb" style="left:634px;top:541px"></div>
<div class="cb" style="left:744px;top:541px"></div>
<div class="cb" style="left:786px;top:541px"></div>
<div class="cb" style="left:818px;top:541px"></div>
<div class="cb" style="left:848px;top:541px"></div>
<div class="cb" style="left:904px;top:541px"></div>
<div class="hl" style="top:573px"></div>
<div class="ex" style="top:559px"></div>
<div class="t k" style="left:23px;top:558px;font-size:11px;width:46px"><span class="s" style="transform:scaleX(0.975)">45061</span></div>
<div class="t k" style="left:72px;top:558px;font-size:11px;width:338px"><span class="s" style="transform:scaleX(0.906)">OBAVEZE ZA NETO NAKNADE ZA GODIŠNJI ODMOR</span></div>
<div class="t k" style="left:414px;top:558px;font-size:11px;width:75px"><span class="s" style="transform:scaleX(0.940)">nema</span></div>
<div class="t k" style="left:491px;top:558px;font-size:11px;width:62px">Dugovni</div>
<div class="t k" style="left:555px;top:558px;font-size:11px;width:69px">dozvoljeno</div>
<div class="t k" style="left:656px;top:558px;font-size:11px;width:68px"><span class="s" style="transform:scaleX(0.950)">NBS srednji</span></div>
<div class="cb" style="left:634px;top:559px"></div>
<div class="cb" style="left:744px;top:559px"></div>
<div class="cb" style="left:786px;top:559px"></div>
<div class="cb" style="left:818px;top:559px"></div>
<div class="cb" style="left:848px;top:559px"></div>
<div class="cb" style="left:904px;top:559px"></div>
<div class="hl" style="top:591px"></div>
<div class="ex" style="top:577px"></div>
<div class="t k" style="left:23px;top:576px;font-size:11px;width:46px"><span class="s" style="transform:scaleX(0.975)">45062</span></div>
<div class="t k" style="left:72px;top:576px;font-size:11px;width:338px"><span class="s" style="transform:scaleX(0.910)">OBAVEZE ZA NETO NAKNADE ZARADA ZA DANE PRAZNIKA</span></div>
<div class="t k" style="left:414px;top:576px;font-size:11px;width:75px"><span class="s" style="transform:scaleX(0.940)">nema</span></div>
<div class="t k" style="left:491px;top:576px;font-size:11px;width:62px">Dugovni</div>
<div class="t k" style="left:555px;top:576px;font-size:11px;width:69px">dozvoljeno</div>
<div class="t k" style="left:656px;top:576px;font-size:11px;width:68px"><span class="s" style="transform:scaleX(0.950)">NBS srednji</span></div>
<div class="cb" style="left:634px;top:577px"></div>
<div class="cb" style="left:744px;top:577px"></div>
<div class="cb" style="left:786px;top:577px"></div>
<div class="cb" style="left:818px;top:577px"></div>
<div class="cb" style="left:848px;top:577px"></div>
<div class="cb" style="left:904px;top:577px"></div>
<div class="hl" style="top:609px"></div>
<div class="ex" style="top:595px"></div>
<div class="t k" style="left:23px;top:594px;font-size:11px;width:46px"><span class="s" style="transform:scaleX(0.975)">45063</span></div>
<div class="t k" style="left:72px;top:594px;font-size:11px;width:338px"><span class="s" style="transform:scaleX(0.905)">OBAVEZE ZA NETO NAKNADE ZARADA ZA VREME STRUČNOG OSPOSOBLJAVANJA</span></div>
<div class="t k" style="left:414px;top:594px;font-size:11px;width:75px"><span class="s" style="transform:scaleX(0.940)">nema</span></div>
<div class="t k" style="left:491px;top:594px;font-size:11px;width:62px">Dugovni</div>
<div class="t k" style="left:555px;top:594px;font-size:11px;width:69px">dozvoljeno</div>
<div class="t k" style="left:656px;top:594px;font-size:11px;width:68px"><span class="s" style="transform:scaleX(0.950)">NBS srednji</span></div>
<div class="cb" style="left:634px;top:595px"></div>
<div class="cb" style="left:744px;top:595px"></div>
<div class="cb" style="left:786px;top:595px"></div>
<div class="cb" style="left:818px;top:595px"></div>
<div class="cb" style="left:848px;top:595px"></div>
<div class="cb" style="left:904px;top:595px"></div>
<div class="hl" style="top:627px"></div>
<div class="ex" style="top:613px"></div>
<div class="t k" style="left:23px;top:612px;font-size:11px;width:46px"><span class="s" style="transform:scaleX(0.975)">45064</span></div>
<div class="t k" style="left:72px;top:612px;font-size:11px;width:338px"><span class="s" style="transform:scaleX(0.905)">OBAVEZE ZA NETO NAKNADE ZARADA ZA DANE PLAĆENOG ODSUSTVA</span></div>
<div class="t k" style="left:414px;top:612px;font-size:11px;width:75px"><span class="s" style="transform:scaleX(0.940)">nema</span></div>
<div class="t k" style="left:491px;top:612px;font-size:11px;width:62px">Dugovni</div>
<div class="t k" style="left:555px;top:612px;font-size:11px;width:69px">dozvoljeno</div>
<div class="t k" style="left:656px;top:612px;font-size:11px;width:68px"><span class="s" style="transform:scaleX(0.950)">NBS srednji</span></div>
<div class="cb" style="left:634px;top:613px"></div>
<div class="cb" style="left:744px;top:613px"></div>
<div class="cb" style="left:786px;top:613px"></div>
<div class="cb" style="left:818px;top:613px"></div>
<div class="cb" style="left:848px;top:613px"></div>
<div class="cb" style="left:904px;top:613px"></div>
<div class="hl" style="top:645px"></div>
<div class="ex" style="top:631px"></div>
<div class="t k" style="left:23px;top:630px;font-size:11px;width:46px"><span class="s" style="transform:scaleX(0.975)">45065</span></div>
<div class="t k" style="left:72px;top:630px;font-size:11px;width:338px"><span class="s" style="transform:scaleX(0.902)">OBAVEZE ZA NETO NAKNADE ZARADA ZA VREME PREKIDA RADA</span></div>
<div class="t k" style="left:414px;top:630px;font-size:11px;width:75px"><span class="s" style="transform:scaleX(0.940)">nema</span></div>
<div class="t k" style="left:491px;top:630px;font-size:11px;width:62px">Dugovni</div>
<div class="t k" style="left:555px;top:630px;font-size:11px;width:69px">dozvoljeno</div>
<div class="t k" style="left:656px;top:630px;font-size:11px;width:68px"><span class="s" style="transform:scaleX(0.950)">NBS srednji</span></div>
<div class="cb" style="left:634px;top:631px"></div>
<div class="cb" style="left:744px;top:631px"></div>
<div class="cb" style="left:786px;top:631px"></div>
<div class="cb" style="left:818px;top:631px"></div>
<div class="cb" style="left:848px;top:631px"></div>
<div class="cb" style="left:904px;top:631px"></div>
<div class="hl" style="top:663px"></div>
<div class="ex" style="top:649px"></div>
<div class="t k" style="left:23px;top:648px;font-size:11px;width:46px"><span class="s" style="transform:scaleX(0.975)">45066</span></div>
<div class="t k" style="left:72px;top:648px;font-size:11px;width:338px"><span class="s" style="transform:scaleX(0.893)">OBAVEZE ZA NETO NAKNADE ZARADA ZA VREME SUSPENZIJE</span></div>
<div class="t k" style="left:414px;top:648px;font-size:11px;width:75px"><span class="s" style="transform:scaleX(0.940)">nema</span></div>
<div class="t k" style="left:491px;top:648px;font-size:11px;width:62px">Dugovni</div>
<div class="t k" style="left:555px;top:648px;font-size:11px;width:69px">dozvoljeno</div>
<div class="t k" style="left:656px;top:648px;font-size:11px;width:68px"><span class="s" style="transform:scaleX(0.950)">NBS srednji</span></div>
<div class="cb" style="left:634px;top:649px"></div>
<div class="cb" style="left:744px;top:649px"></div>
<div class="cb" style="left:786px;top:649px"></div>
<div class="cb" style="left:818px;top:649px"></div>
<div class="cb" style="left:848px;top:649px"></div>
<div class="cb" style="left:904px;top:649px"></div>
<div class="hl" style="top:681px"></div>
<div class="ex" style="top:667px"></div>
<div class="t k" style="left:23px;top:666px;font-size:11px;width:46px"><span class="s" style="transform:scaleX(0.975)">45067</span></div>
<div class="t k" style="left:72px;top:666px;font-size:11px;width:338px"><span class="s" style="transform:scaleX(0.905)">OBAVEZE ZA NETO NAKNADE ZARADA ZA VREME DRUGIH ODSUSTVOVANJA</span></div>
<div class="t k" style="left:414px;top:666px;font-size:11px;width:75px"><span class="s" style="transform:scaleX(0.940)">nema</span></div>
<div class="t k" style="left:491px;top:666px;font-size:11px;width:62px">Dugovni</div>
<div class="t k" style="left:555px;top:666px;font-size:11px;width:69px">dozvoljeno</div>
<div class="t k" style="left:656px;top:666px;font-size:11px;width:68px"><span class="s" style="transform:scaleX(0.950)">NBS srednji</span></div>
<div class="cb" style="left:634px;top:667px"></div>
<div class="cb" style="left:744px;top:667px"></div>
<div class="cb" style="left:786px;top:667px"></div>
<div class="cb" style="left:818px;top:667px"></div>
<div class="cb" style="left:848px;top:667px"></div>
<div class="cb" style="left:904px;top:667px"></div>
<div class="a" style="left:7px;top:685px;width:11px;height:1px;background:#8fa0bd"></div>
<div class="a" style="left:634px;top:685px;width:11px;height:1px;background:#000"></div>
<div class="a" style="left:744px;top:685px;width:11px;height:1px;background:#000"></div>
<div class="a" style="left:786px;top:685px;width:11px;height:1px;background:#000"></div>
<div class="a" style="left:818px;top:685px;width:11px;height:1px;background:#000"></div>
<div class="a" style="left:848px;top:685px;width:11px;height:1px;background:#000"></div>
<div class="a" style="left:904px;top:685px;width:11px;height:1px;background:#000"></div>
<div class="a" style="left:655px;top:179px;width:69px;height:15px;background:#fff"></div>
<div class="t k" style="left:656px;top:180px;font-size:11px;width:50px"><span class="s" style="transform:scaleX(0.950)">NBS srednji</span></div>
<div class="a" style="left:706px;top:179px;width:17px;height:15px;background:#c0c0c0"></div>
<svg class="a" style="left:706px;top:179px" width="17" height="15" viewBox="0 0 17 15"><path d="M4.5 6H12.5L8.5 10z" fill="#000"/></svg>
<div class="a" style="left:656px;top:195px;width:79px;height:91px;background:#000"></div>
<div class="a" style="left:657px;top:196px;width:77px;height:89px;background:#fff"></div>
<div class="a" style="left:657px;top:196px;width:77px;height:14px;background:#0078d7;box-sizing:border-box;border:1px dotted #e8a33d"></div>
<div class="t k" style="left:658px;top:196px;font-size:11px;color:#fff;width:76px"><span class="s" style="transform:scaleX(0.942)">NBS srednji</span></div>
<div class="t k" style="left:658px;top:211px;font-size:11px;width:76px"><span class="s" style="transform:scaleX(0.985)">Sopstvena</span></div>
<div class="t k" style="left:658px;top:226px;font-size:11px;width:76px"><span class="s" style="transform:scaleX(0.978)">NBS kup.dev.</span></div>
<div class="t k" style="left:658px;top:241px;font-size:11px;width:76px"><span class="s" style="transform:scaleX(0.969)">NBS Prod.dev.</span></div>
<div class="t k" style="left:658px;top:256px;font-size:11px;width:76px"><span class="s" style="transform:scaleX(0.952)">NBS Kup.efek.</span></div>
<div class="t k" style="left:658px;top:271px;font-size:11px;width:76px"><span class="s" style="transform:scaleX(0.956)">NBS Prod.efek.</span></div>
<div class="a" style="left:1020px;top:50px;width:15px;height:636px;background:#f0f0f0"></div>
<div class="a" style="left:1020px;top:326px;width:15px;height:16px;background:#cdcdcd"></div>
<svg class="a" style="left:1020px;top:50px" width="15" height="17" viewBox="0 0 15 17"><path d="M4 10.7L7.5 7.2L11 10.7" stroke="#555" stroke-width="1.9" fill="none"/></svg>
<svg class="a" style="left:1020px;top:669px" width="15" height="17" viewBox="0 0 15 17"><path d="M4 7L7.5 10.5L11 7" stroke="#555" stroke-width="1.9" fill="none"/></svg>
<div class="a" style="left:4px;top:686px;width:1031px;height:19px;background:#f0f0f0"></div>
<div class="a" style="left:4px;top:686px;width:347px;height:19px;background:#fff"></div>
<div class="nb" style="left:5px"><svg width="15" height="17" viewBox="0 0 15 17" style="position:absolute;left:0;top:0"><path d="M3.4 5v7.2" stroke="#333" stroke-width="1.3"/><path d="M8.2 4.9v7.4L4 8.6zM12.3 4.9v7.4L8.1 8.6z" fill="#333"/></svg></div>
<div class="nb" style="left:22px"><svg width="15" height="17" viewBox="0 0 15 17" style="position:absolute;left:0;top:0"><path d="M7 4.9v7.4L2.7 8.6zM11.3 4.9v7.4L7 8.6z" fill="#333"/></svg></div>
<div class="nb" style="left:39px"><svg width="15" height="17" viewBox="0 0 15 17" style="position:absolute;left:0;top:0"><path d="M9.3 4.7v7.8L4.8 8.6z" fill="#333"/></svg></div>
<div class="nb" style="left:148px"><svg width="15" height="17" viewBox="0 0 15 17" style="position:absolute;left:0;top:0"><path d="M5.8 4.5v8L10.5 8.5z" fill="#333"/></svg></div>
<div class="nb" style="left:165px"><svg width="15" height="17" viewBox="0 0 15 17" style="position:absolute;left:0;top:0"><path d="M3.6 4.8v7.4L8 8.5zM7.8 4.8v7.4L12.2 8.5z" fill="#333"/></svg></div>
<div class="nb" style="left:182px"><svg width="15" height="17" viewBox="0 0 15 17" style="position:absolute;left:0;top:0"><path d="M2.8 4.8v7.4L7 8.5zM6.8 4.8v7.4L11 8.5z" fill="#333"/><path d="M11.7 4.8v7.4" stroke="#333" stroke-width="1.3"/></svg></div>
<div class="nb" style="left:199px"><svg width="15" height="17" viewBox="0 0 15 17" style="position:absolute;left:0;top:0"><path d="M3.8 8h8.6M8.1 3.7v8.6" stroke="#1e9a1e" stroke-width="2.2"/></svg></div>
<div class="nb" style="left:216px"><svg width="15" height="17" viewBox="0 0 15 17" style="position:absolute;left:0;top:0"><path d="M2.9 7.9h9.4" stroke="#c8141e" stroke-width="2.2"/></svg></div>
<div class="nb" style="left:233px"><svg width="15" height="17" viewBox="0 0 15 17" style="position:absolute;left:0;top:0"><path d="M3.6 10.1h7.7L7.45 5.8z" fill="#333"/></svg></div>
<div class="nb d" style="left:250px"><svg width="15" height="17" viewBox="0 0 15 17" style="position:absolute;left:0;top:0"><path d="M3.1 8l3.3 3.4L11.6 5.3" stroke="#b2b2b2" stroke-width="2" fill="none"/></svg></div>
<div class="nb d" style="left:267px"><svg width="15" height="17" viewBox="0 0 15 17" style="position:absolute;left:0;top:0"><path d="M3.4 4.5l8.6 8M12 4.5l-8.6 8" stroke="#adadad" stroke-width="1.9" fill="none"/></svg></div>
<div class="nb" style="left:284px"><svg width="15" height="17" viewBox="0 0 15 17" style="position:absolute;left:0;top:0"><path d="M3.4 10.2C3.2 6.2 8 4.4 10.3 8.2" stroke="#333" stroke-width="1.8" fill="none"/><path d="M12 5.9V11H7.3z" fill="#333"/></svg></div>
<div class="nb" style="left:301px"><svg width="15" height="17" viewBox="0 0 15 17" style="position:absolute;left:0;top:0"><path d="M7.3 4v9M2.8 8.5h9M4.1 5.3l6.4 6.4M10.5 5.3l-6.4 6.4" stroke="#000" stroke-width="1.3"/></svg></div>
<div class="nb d" style="left:318px"><svg width="15" height="17" viewBox="0 0 15 17" style="position:absolute;left:0;top:0"><path d="M8.7 5.2v8.6M4.4 9.5h8.6M5.7 6.5l6 6M11.7 6.5l-6 6" stroke="#9a9a9a" stroke-width="1.1"/><path d="M2.2 4v4l2.5-2z" fill="#9a9a9a"/></svg></div>
<div class="nb d" style="left:335px"><svg width="15" height="17" viewBox="0 0 15 17" style="position:absolute;left:0;top:0"><path d="M3.7 5.9h7.5v2l-2.4 1.8v2h-2.7v-2l-2.4-1.8z" fill="#b9b9b9"/></svg></div>
<div class="t" style="left:62px;top:689px;font-size:13px"><span class="s" style="transform:scaleX(0.977)">1076 od 2457</span></div>
<svg class="a" style="left:403px;top:687px" width="15" height="17" viewBox="0 0 15 17"><path d="M9 5L5.5 8.5L9 12" stroke="#404040" stroke-width="1.7" fill="none"/></svg>
<div class="a" style="left:418px;top:687px;width:363px;height:17px;background:#cdcdcd"></div>
<svg class="a" style="left:1003px;top:687px" width="15" height="17" viewBox="0 0 15 17"><path d="M6 5L9.5 8.5L6 12" stroke="#555" stroke-width="2" fill="none"/></svg>
<div class="a" style="left:3px;top:705px;width:1034px;height:1px;background:#10399f"></div>
<div class="pn" style="left:4px;width:70px"></div>
<div class="pn" style="left:78px;width:90px"></div>
<div class="pn" style="left:172px;width:200px"></div>
<div class="pn" style="left:376px;width:150px"></div>
<div class="pn" style="left:530px;width:194px"></div>
<div class="pn" style="left:728px;width:150px"></div>
<div class="pn" style="left:882px;width:70px"></div>
<div class="pn" style="left:956px;width:79px"></div>
<div class="cb" style="left:8px;top:715px"></div>
<svg class="a" style="left:8px;top:715px" width="11" height="11" viewBox="0 0 11 11"><path d="M2.1 5.3L4.5 8L8.7 2.5" stroke="#000" stroke-width="1.9" fill="none"/></svg>
<div class="t" style="left:25px;top:714px;color:#800000"><span class="s" style="transform:scaleX(0.952)">F2-IZM</span></div>
<div class="cb" style="left:82px;top:715px"></div>
<div class="t" style="left:99px;top:714px"><span class="s" style="transform:scaleX(1.022)">Sve firme</span></div>
<svg class="a" style="left:177px;top:713px" width="16" height="16" viewBox="0 0 16 16"><circle cx="8" cy="8" r="8" fill="#4a7fc1"/><circle cx="8" cy="4" r="1.3" fill="#fff"/><rect x="7" y="6.3" width="2" height="6" fill="#fff"/></svg>
<div class="a" style="left:199px;top:709px;width:95px;height:22px;border:1px solid #8e8e8e;background:#fff;box-sizing:content-box"></div>
<div class="t" style="left:202px;top:714px"><span class="s" style="transform:scaleX(0.942)">KPL2014PDP</span></div>
<div class="a" style="left:279px;top:711px;width:15px;height:20px;background:#dcdcdc"></div>
<svg class="a" style="left:279px;top:711px" width="15" height="20" viewBox="0 0 15 20"><path d="M3 8H12L7.5 13z" fill="#000"/></svg>
<div class="btn" style="left:298px;width:72px"></div>
<div class="t" style="left:308px;top:714px"><span class="s" style="transform:scaleX(0.969)">PROMENI</span></div>
<div class="t" style="left:393px;top:714px;font-size:11px"><span class="s" style="transform:scaleX(0.994)">F1 - Pretraga po računu</span></div>
<div class="t" style="left:533px;top:714px;font-size:11px"><span class="s" style="transform:scaleX(0.983)">F7 - Pretraga po nazivu, F9 - Svi računi</span></div>
<div class="t" style="left:746px;top:714px;font-size:11px"><span class="s" style="transform:scaleX(0.956)">F8 - Samo sa prometom</span></div>
<div class="btn" style="left:884px;width:66px"></div>
<div class="t" style="left:898px;top:714px"><span class="s" style="transform:scaleX(1.047)">Kartica</span></div>
<div class="btn" style="left:958px;width:76px"></div>
<div class="t" style="left:988px;top:714px"><span class="s" style="transform:scaleX(0.940)">OK</span></div>
<div class="a" style="left:2px;top:735px;width:1035px;height:2px;background:#a8a8a8"></div>
<div class="a" style="left:1035px;top:49px;width:2px;height:657px;background:#10399f"></div>
<svg class="a" style="left:0;top:0" width="1037" height="737" viewBox="0 0 1037 737"><rect x="646.7" y="46.7" width="94.9" height="671.8" rx="15" ry="15" fill="none" stroke="#ed1c24" stroke-width="5.2"/></svg>
</body></html>
